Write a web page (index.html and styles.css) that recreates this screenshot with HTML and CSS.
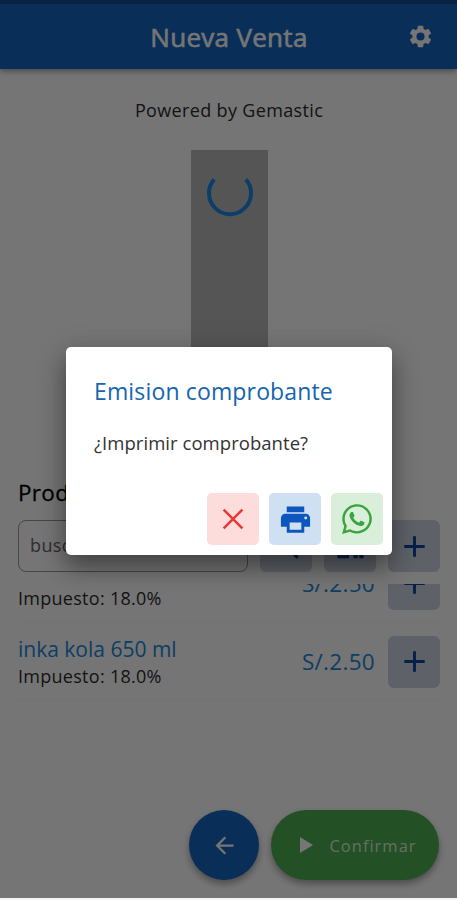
FILE: index.html
```html
<!DOCTYPE html>
<html lang="es">
<head>
<meta charset="utf-8">
<title>Nueva Venta</title>
<link rel="stylesheet" href="styles.css">
</head>
<body>
<div class="app">
  <header class="bar">
    <h1>Nueva Venta</h1>
    <svg class="gear" viewBox="0 0 24 24"><path d="M19.14 12.94c.04-.3.06-.61.06-.94s-.02-.64-.07-.94l2.03-1.58a.49.49 0 0 0 .12-.61l-1.92-3.32a.49.49 0 0 0-.59-.22l-2.39.96c-.5-.38-1.03-.7-1.62-.94l-.36-2.54a.48.48 0 0 0-.48-.41h-3.84c-.24 0-.43.17-.47.41l-.36 2.54c-.59.24-1.13.57-1.62.94l-2.39-.96a.48.48 0 0 0-.59.22L2.74 8.87c-.12.21-.08.47.12.61l2.03 1.58c-.05.3-.09.63-.09.94s.02.64.07.94l-2.03 1.58a.49.49 0 0 0-.12.61l1.92 3.32c.12.22.37.29.59.22l2.39-.96c.5.38 1.03.7 1.62.94l.36 2.54c.05.24.24.41.48.41h3.84c.24 0 .44-.17.47-.41l.36-2.54c.59-.24 1.13-.56 1.62-.94l2.39.96c.22.08.47 0 .59-.22l1.92-3.32a.48.48 0 0 0-.12-.61zM12 15.6A3.6 3.6 0 1 1 12 8.4a3.6 3.6 0 0 1 0 7.2z"/></svg>
  </header>
  <main>
    <p class="powered">Powered by Gemastic</p>
    <div class="loading"><svg viewBox="0 0 48 48"><path d="M9.2 9.4A21 21 0 1 0 40.8 9.4"/></svg></div>
    <h2>Productos</h2>
    <div class="search">
      <div class="field">buscar</div>
      <div class="tile"><svg viewBox="0 0 24 24"><path d="M15.5 14h-.8l-.3-.3a6.5 6.5 0 1 0-.7.7l.3.3v.8l5 5 1.5-1.5zm-6 0a4.5 4.5 0 1 1 0-9 4.5 4.5 0 0 1 0 9z"/></svg></div>
      <div class="tile"><svg viewBox="0 0 24 24"><path d="M3 3h8v8H3zm2 2v4h4V5zm-2 8h8v7H3zm2 2v3h4v-3zm8-12h8v8h-8zm2 2v4h4V5zm-2 8h3v3h-3zm1 4h3v3h-3zm4 0h3v3h-3zm0-4h3v3h-3z"/></svg></div>
      <div class="tile"><svg viewBox="0 0 24 24"><path d="M19 13h-6v6h-2v-6H5v-2h6V5h2v6h6z"/></svg></div>
    </div>
    <div class="list">
      <div class="row">
        <div class="info"><span class="name">inka kola 500 ml</span><span class="tax">Impuesto: 18.0%</span></div>
        <span class="price">S/.2.50</span>
        <div class="tile"><svg viewBox="0 0 24 24"><path d="M19 13h-6v6h-2v-6H5v-2h6V5h2v6h6z"/></svg></div>
      </div>
      <div class="row">
        <div class="info"><span class="name">inka kola 650 ml</span><span class="tax">Impuesto: 18.0%</span></div>
        <span class="price">S/.2.50</span>
        <div class="tile"><svg viewBox="0 0 24 24"><path d="M19 13h-6v6h-2v-6H5v-2h6V5h2v6h6z"/></svg></div>
      </div>
    </div>
  </main>
  <footer>
    <div class="back"><svg viewBox="0 0 24 24"><path d="M20 11H7.83l5.59-5.59L12 4l-8 8 8 8 1.41-1.41L7.83 13H20z"/></svg></div>
    <div class="confirm"><svg viewBox="0 0 24 24"><path d="M7 4v16l13-8z"/></svg><span>Confirmar</span></div>
  </footer>
</div>
<div class="overlay">
  <section class="dialog">
    <h3>Emision comprobante</h3>
    <p>¿Imprimir comprobante?</p>
    <div class="actions">
      <div class="action no"><svg viewBox="0 0 24 24"><path d="M4.5 4.5l15 15M19.5 4.5l-15 15"/></svg></div>
      <div class="action print"><svg viewBox="0 0 24 24"><path d="M19 8H5c-1.66 0-3 1.34-3 3v6h4v4h12v-4h4v-6c0-1.66-1.34-3-3-3zm-3 11H8v-5h8v5zm3-7a1 1 0 1 1 0-2 1 1 0 0 1 0 2zM18 3H6v4h12z"/></svg></div>
      <div class="action wa"><svg viewBox="0 0 448 512"><path d="M380.9 97.1C339 55.1 283.2 32 223.9 32c-122.4 0-222 99.6-222 222 0 39.1 10.2 77.3 29.6 111L0 480l117.7-30.9c32.4 17.7 68.9 27 106.1 27h.1c122.3 0 224.1-99.6 224.1-222 0-59.3-25.2-115-67.1-157zm-157 341.6c-33.2 0-65.7-8.9-94-25.7l-6.7-4-69.8 18.3L72 359.2l-4.4-7c-18.5-29.4-28.2-63.3-28.2-98.2 0-101.7 82.8-184.5 184.6-184.5 49.3 0 95.6 19.2 130.4 54.1 34.8 34.9 56.2 81.2 56.1 130.5 0 101.8-84.9 184.6-186.6 184.6zm101.2-138.2c-5.5-2.8-32.8-16.2-37.9-18-5.1-1.9-8.8-2.8-12.5 2.8-3.7 5.6-14.3 18-17.6 21.8-3.2 3.7-6.5 4.2-12 1.4-32.6-16.3-54-29.1-75.5-66-5.7-9.8 5.7-9.1 16.3-30.3 1.8-3.7.9-6.9-.5-9.7-1.4-2.8-12.5-30.1-17.1-41.2-4.5-10.8-9.1-9.3-12.5-9.5-3.2-.2-6.9-.2-10.6-.2-3.7 0-9.7 1.4-14.8 6.9-5.1 5.6-19.4 19-19.4 46.3 0 27.3 19.9 53.7 22.6 57.4 2.8 3.7 39.1 59.7 94.8 83.8 35.2 15.2 49 16.5 66.6 13.9 10.7-1.6 32.8-13.4 37.4-26.4 4.6-13 4.6-24.1 3.2-26.4-1.3-2.5-5-3.9-10.5-6.6z"/></svg></div>
    </div>
  </section>
</div>
</body>
</html>
```

FILE: styles.css
```css
* { box-sizing: border-box; margin: 0; }
body { background: #f4f4f4; font-family: "Open Sans", "Noto Sans", sans-serif; overflow: hidden; }
svg { display: block; fill: currentColor; }
.app { height: 898px; background: #fff; color: #2c2c2c; display: flex; flex-direction: column; }
.bar { height: 69px; flex: none; display: grid; grid-template-columns: 1fr auto 1fr; align-items: center; padding: 0 23px 0 24px; background: #1565c0; border-top: 4px solid #104a90; color: #fff; box-shadow: 0 2px 6px rgba(0,0,0,.4); }
.bar h1 { grid-column: 2; font-size: 26px; font-weight: 400; line-height: 36px; letter-spacing: .3px; -webkit-text-stroke: .6px #fff; }
.gear { width: 27px; height: 27px; justify-self: end; }
main { flex: 1; padding: 0 17px 0 18px; display: flex; flex-direction: column; }
.powered { margin-top: 29px; text-align: center; font-size: 18px; line-height: 24px; letter-spacing: .35px; }
.loading { width: 77px; height: 227px; margin: 28px auto 0; padding-top: 20px; background: #b9b9b9; flex: none; }
.loading svg { width: 48px; height: 48px; margin: 0 auto; fill: none; stroke: #1e88e5; stroke-width: 4; }
h2 { margin-top: 101px; font-size: 22.5px; font-weight: 500; line-height: 30px; letter-spacing: .3px; color: #000; -webkit-text-stroke: .3px #000; }
.search { display: flex; gap: 12px; margin-top: 12px; }
.field { flex: 1; height: 52px; border: 1.5px solid #999; border-radius: 8px; padding: 0 11px; font-size: 18px; line-height: 49px; letter-spacing: .4px; color: #666; }
.tile { width: 52px; height: 52px; flex: none; border-radius: 6px; background: #ccd5e3; color: #0d47a1; display: flex; align-items: center; justify-content: center; }
.tile svg { width: 35px; height: 35px; }
.list { height: 117px; margin-top: 12px; overflow: hidden; display: flex; flex-direction: column; justify-content: flex-end; }
.row { height: 78px; flex: none; display: flex; align-items: center; border-bottom: 1px solid #f9f9f9; }
.info { flex: 1; display: flex; flex-direction: column; padding-top: 1px; }
.name { font-size: 21px; line-height: 28px; color: #2188d8; }
.tax { font-size: 18px; line-height: 27px; letter-spacing: .28px; }
.price { margin-right: 13px; font-size: 22.5px; letter-spacing: .3px; line-height: 30px; color: #2188d8; }
footer { flex: none; display: flex; justify-content: flex-end; gap: 12px; padding: 0 18px 18px; color: #fff; }
.back, .confirm { height: 70px; border-radius: 35px; display: flex; align-items: center; justify-content: center; box-shadow: 0 4px 7px rgba(0,0,0,.35); }
.back { width: 70px; background: #1565c0; }
.back svg { width: 27px; height: 27px; }
.confirm { width: 168px; gap: 12px; background: #4caf50; font-size: 16.5px; font-weight: 400; letter-spacing: 1px; }
.confirm svg { width: 24px; height: 24px; }
.confirm span { color: #dcefdd; }
.overlay { position: absolute; top: 0; left: 0; width: 457px; height: 898px; background: rgba(0,0,0,.54); display: flex; align-items: flex-start; justify-content: center; padding: 347px 0 0 1px; }
.dialog { width: 326px; height: 208px; background: #fff; border-radius: 5px; padding: 28px 9px 10px 28px; box-shadow: 0 13px 22px rgba(0,0,0,.35), 0 5px 32px rgba(0,0,0,.15); display: flex; flex-direction: column; }
.dialog h3 { font-size: 23px; font-weight: 400; line-height: 32px; letter-spacing: .15px; color: #1565b0; }
.dialog p { margin-top: 23px; font-size: 18.5px; line-height: 26px; letter-spacing: .05px; color: #333; }
.actions { display: flex; justify-content: flex-end; gap: 10px; margin-top: auto; }
.action { width: 52px; height: 52px; border-radius: 5px; display: flex; align-items: center; justify-content: center; }
.no { background: #fddcdc; color: #e53935; }
.no svg { width: 30px; height: 30px; fill: none; stroke: currentColor; stroke-width: 2; }
.print { background: #d0e0f3; color: #0d56bd; }
.print svg { width: 35px; height: 35px; }
.wa { background: #daefda; color: #38a63c; }
.wa svg { width: 30px; height: 34px; }
```
